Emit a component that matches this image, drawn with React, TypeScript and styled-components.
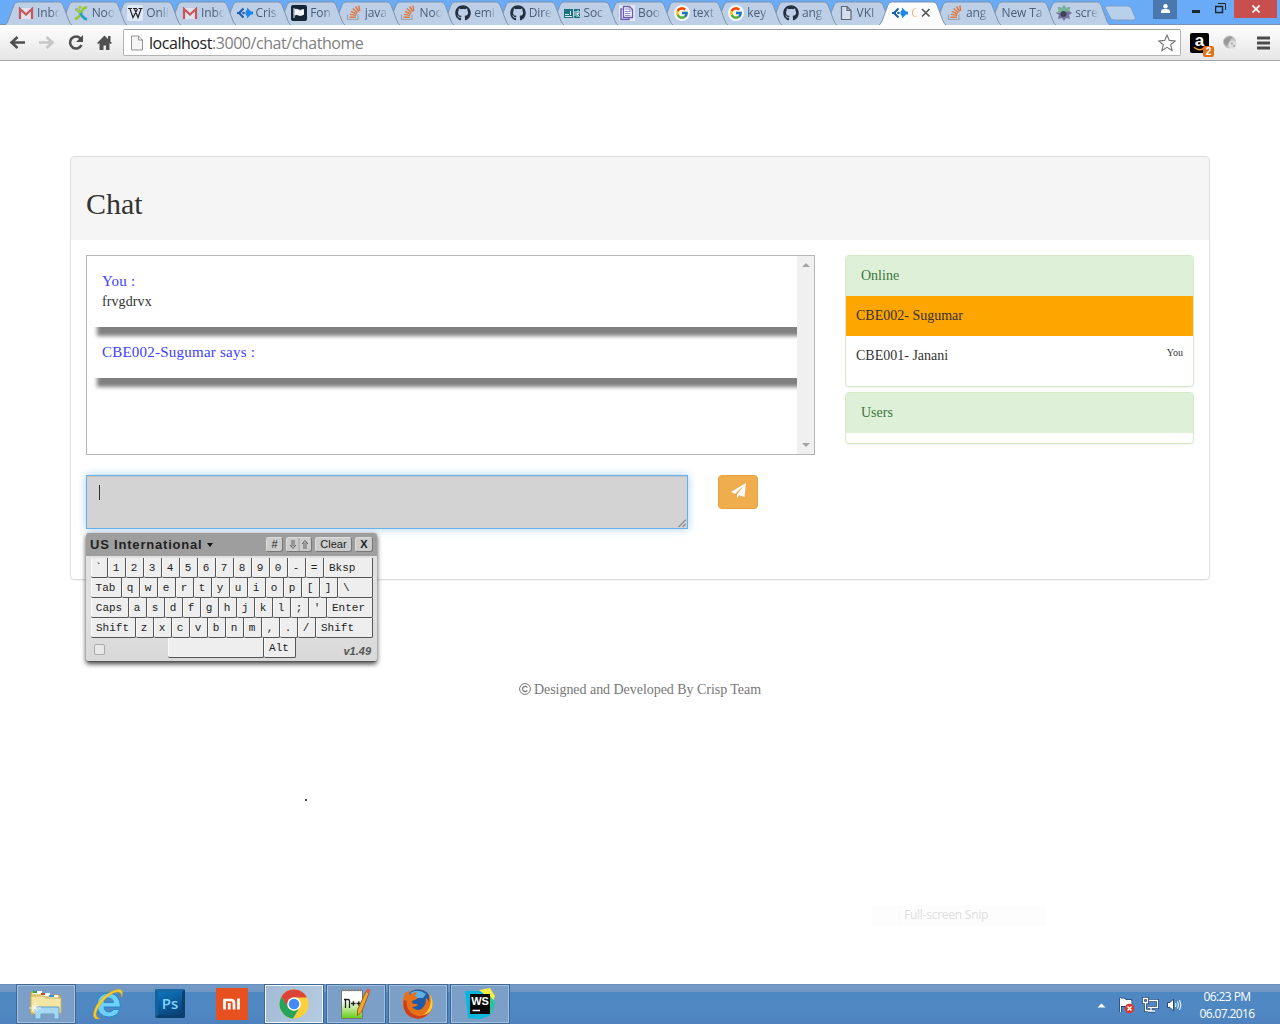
import React from 'react';
import styled, { createGlobalStyle, css } from 'styled-components';
import { FaGithub } from 'react-icons/fa';
import { FcGoogle } from 'react-icons/fc';

const GlobalStyle = createGlobalStyle`
  *, *::before, *::after { box-sizing: border-box; }
  body { margin: 0; background: #fff; overflow: hidden; }
`;

const uiFont = css`font-family: "Open Sans", "Noto Sans", sans-serif;`;

const Screen = styled.div`
  width: 1280px;
  height: 1024px;
  display: flex;
  flex-direction: column;
  font: 14px/20px "Liberation Serif", "Times New Roman", serif;
  color: #333;
  background: #fff;
  overflow: hidden;
`;

/* ---------- browser chrome ---------- */

const TabStrip = styled.header`
  ${uiFont}
  flex: none;
  height: 25px;
  display: flex;
  padding-left: 5px;
  background: #69abf6;
  border-bottom: 1px solid #7893b4;
`;

const TabBox = styled.div<{ $order: number }>`
  position: relative;
  flex: 0 0 54.65px;
  min-width: 0;
  height: 25px;
  z-index: ${p => p.$order};
`;

const TabShape = styled.svg`
  position: absolute;
  left: 0;
  top: 1px;
  display: block;
`;

const TabContent = styled.div`
  position: relative;
  display: flex;
  align-items: center;
  gap: 3px;
  height: 25px;
  padding-left: 13px;
  svg { flex: none; }
`;

const TabLabel = styled.span<{ $fade: number; $active?: boolean }>`
  flex: none;
  white-space: nowrap;
  font-size: 12px;
  line-height: 18px;
  letter-spacing: -0.1px;
  color: ${p => (p.$active ? '#e39a3b' : '#4b5e78')};
  mask-image: linear-gradient(90deg, #000 ${p => p.$fade - 9}px, transparent ${p => p.$fade}px);
`;

const CloseIcon = styled.svg`
  margin-left: -1px;
`;

const NewTab = styled.svg`
  flex: none;
  margin: 5px 0 0 6px;
  display: block;
`;

const WindowControls = styled.div`
  margin-left: auto;
  display: flex;
  align-items: flex-start;
  padding-right: 3px;
`;

const UserButton = styled.div`
  width: 24px;
  height: 19px;
  background: #4a78ae;
  display: grid;
  place-items: center;
  padding-bottom: 3px;
`;

const ControlButton = styled.div<{ $width: number; $bg?: string; $shift?: number }>`
  width: ${p => p.$width}px;
  height: 18px;
  padding-left: ${p => p.$shift ?? 0}px;
  background: ${p => p.$bg ?? 'transparent'};
  display: grid;
  place-items: center;
`;

const Toolbar = styled.nav`
  ${uiFont}
  flex: none;
  height: 36px;
  display: flex;
  align-items: center;
  padding-left: 8px;
  background: linear-gradient(#fefefe, #e6e6e6);
  border-bottom: 1px solid #a6a6a6;
`;

const NavIcons = styled.div`
  display: flex;
  width: 115px;
  gap: 9px;
  svg { display: block; }
`;

const AddressBar = styled.div`
  width: 1058px;
  height: 27px;
  display: flex;
  align-items: center;
  padding: 0 4px 0 6px;
  border: 1px solid #b3b3b3;
  border-top-color: #9f9f9f;
  border-radius: 2px;
  background: #fff;
`;

const Address = styled.span`
  margin-left: 5px;
  flex: 1;
  font-size: 16px;
  line-height: 22px;
  letter-spacing: -0.45px;
  color: #808080;
  b { font-weight: 400; color: #222; }
`;

const Extensions = styled.div`
  margin-left: 9px;
  display: flex;
  align-items: center;
  gap: 8px;
  svg { display: block; }
`;

const AmazonBadge = styled.div`
  position: relative;
  width: 19px;
  height: 20px;
  padding-top: 1px;
  border-radius: 2px;
  background: #000;
  color: #fff;
  font: bold 17px/13px "Liberation Sans", Arial, sans-serif;
  text-align: center;
`;

const AmazonSmile = styled.svg`
  margin: 0 3px;
`;

const AmazonCount = styled.span`
  position: absolute;
  left: 13px;
  top: 13px;
  width: 11px;
  height: 11px;
  border-radius: 2px;
  background: #e1701a;
  font: bold 10px/11px "Liberation Sans", Arial, sans-serif;
`;

/* ---------- page ---------- */

const Page = styled.main`
  flex: 1;
  min-height: 0;
  display: flex;
  flex-direction: column;
  padding: 95px 70px 0;
`;

const Panel = styled.section`
  width: 1140px;
  height: 424px;
  flex: none;
  border: 1px solid #ddd;
  border-radius: 4px;
  box-shadow: 0 1px 1px rgba(0, 0, 0, 0.05);
`;

const PanelHeading = styled.div`
  height: 83px;
  padding: 30px 15px 0;
  background: #f5f5f5;
  border-radius: 3px 3px 0 0;
`;

const Title = styled.h2`
  margin: 0;
  font-weight: 400;
  font-size: 30px;
  line-height: 33px;
`;

const PanelBody = styled.div`
  display: flex;
  gap: 30px;
  padding: 15px;
`;

const Conversation = styled.div`
  width: 729px;
  flex: none;
`;

const MessageBox = styled.div`
  display: flex;
  height: 200px;
  border: 1px solid #b5b5b5;
`;

const Messages = styled.div`
  flex: 1;
  overflow: hidden;
  padding: 15px 0 0 5px;
`;

const Message = styled.div`
  margin-bottom: 15px;
  padding: 0 10px 16px;
  background: #fff;
  box-shadow: 5px 9px 4px gray;
`;

const Sender = styled.div`
  font-size: 15px;
  color: #4040ff;
  letter-spacing: 0.23px;
`;

const MessageText = styled.div`
  margin-bottom: -2px;
  line-height: 22px;
  letter-spacing: 0.1px;
`;

const ScrollTrack = styled.div`
  width: 17px;
  display: flex;
  flex-direction: column;
  justify-content: space-between;
  align-items: center;
  padding: 7px 0 7px;
  background: #f0f0f0;
`;

const Composer = styled.div`
  display: flex;
  align-items: flex-start;
  gap: 30px;
  margin-top: 20px;
`;

const InputWrap = styled.div`
  position: relative;
  width: 602px;
`;

const Input = styled.div`
  height: 54px;
  display: flex;
  justify-content: space-between;
  padding: 9px 1px 1px 12px;
  background: #d3d3d3;
  border: 1px solid #66afe9;
  box-shadow: inset 0 1px 1px rgba(0, 0, 0, 0.075), 0 0 8px rgba(102, 175, 233, 0.6);
`;

const Caret = styled.span`
  width: 1px;
  height: 15px;
  background: #333;
`;

const Grip = styled.svg`
  align-self: flex-end;
  display: block;
`;

const SendButton = styled.button`
  width: 40px;
  height: 34px;
  padding: 0 0 4px 1px;
  display: grid;
  place-items: center;
  border: 1px solid #eea236;
  border-radius: 4px;
  background: #f0ad4e;
  color: #fff;
`;

const Sidebar = styled.aside`
  width: 349px;
  display: flex;
  flex-direction: column;
  gap: 5px;
`;

const ListPanel = styled.section`
  padding-bottom: 10px;
  border: 1px solid #d6e9c6;
  border-radius: 4px;
  box-shadow: 0 1px 1px rgba(0, 0, 0, 0.05);
`;

const ListHeading = styled.div`
  height: 40px;
  padding: 10px 15px;
  border-radius: 3px 3px 0 0;
  background: #dff0d8;
  color: #3c763d;
`;

const UserRow = styled.div<{ $active?: boolean }>`
  display: flex;
  justify-content: space-between;
  height: 40px;
  padding: 10px;
  background: ${p => (p.$active ? 'orange' : 'transparent')};
  small { font-size: 10px; line-height: 14px; }
`;

const Footer = styled.footer`
  margin-top: 100px;
  display: flex;
  justify-content: center;
  align-items: center;
  gap: 3px;
  color: #777;
  letter-spacing: -0.04px;
  svg { margin-bottom: 2px; }
`;

const Speck = styled.div`
  width: 2px;
  height: 2px;
  margin: 99px 0 0 235px;
  background: #444;
`;

const SnipGhost = styled.div`
  ${uiFont}
  width: 174px;
  height: 21px;
  margin: 104px 0 0 802px;
  padding-left: 32px;
  background: linear-gradient(90deg, #fdfdfd 27px, #f9f9f9 27px, #f9f9f9 28px, #fdfdfd 28px);
  color: #dedede;
  font-size: 12px;
  line-height: 20px;
  letter-spacing: -0.25px;
`;

/* ---------- virtual keyboard ---------- */

const Keyboard = styled.div`
  position: absolute;
  left: 0;
  top: 58px;
  width: 291px;
  height: 129px;
  border-radius: 3px;
  background: linear-gradient(#e0e0e0 60%, #d9d9d9);
  border-bottom: 1px solid #555;
  box-shadow: 0 2px 5px rgba(0, 0, 0, 0.75);
  color: #222;
  z-index: 2;
`;

const KeyboardHeader = styled.div`
  height: 23px;
  display: flex;
  align-items: center;
  gap: 3px;
  padding: 0 4px 1px;
  border-radius: 3px 3px 0 0;
  background: #9e9e9e;
  font-family: "Liberation Sans", Arial, sans-serif;
`;

const LayoutName = styled.div`
  flex: 1;
  display: flex;
  align-items: center;
  gap: 5px;
  padding-top: 2px;
  font-size: 13px;
  font-weight: bold;
  letter-spacing: 0.8px;
  white-space: nowrap;
`;

const HeaderButton = styled.span<{ $width: number; $bold?: boolean }>`
  flex: none;
  width: ${p => p.$width}px;
  height: 15px;
  display: flex;
  justify-content: center;
  align-items: center;
  border-radius: 3px;
  background: #ccc;
  border: 1px solid #ddd;
  border-right-color: #777;
  border-bottom-color: #777;
  font-size: 11px;
  line-height: 14px;
  font-weight: ${p => (p.$bold ? 'bold' : 'normal')};
`;

const KeyRows = styled.div`
  display: flex;
  flex-direction: column;
  padding: 2px 4px 0 5px;
`;

const KeyRow = styled.div`
  display: flex;
  height: 20px;
`;

const Key = styled.span<{ $width: number }>`
  width: ${p => p.$width}px;
  height: 20px;
  padding-right: 1px;
  display: grid;
  place-items: center;
  border-right: 1px solid #555;
  border-bottom: 1px solid #555;
  border-radius: 0 0 2px 2px;
  box-shadow: inset 1px 0 #fafafa;
  background: #eee;
  font: 11px/18px "Liberation Mono", "Courier New", monospace;
`;

const LeftKey = styled(Key)`
  justify-items: start;
  padding-left: 5px;
`;

const LastRow = styled.div`
  display: flex;
  align-items: flex-start;
  height: 20px;
`;

const CheckBox = styled.span`
  width: 11px;
  height: 11px;
  margin: 6px 63px 0 3px;
  border: 1px solid #aaa;
  border-radius: 2px;
  background: #e8e8e8;
`;

const Version = styled.span`
  margin: 4px 2px 0 auto;
  color: #555;
  font: italic bold 11px/18px "Liberation Sans", Arial, sans-serif;
`;

/* ---------- taskbar ---------- */

const Taskbar = styled.footer`
  ${uiFont}
  flex: none;
  height: 40px;
  display: flex;
  align-items: stretch;
  gap: 2px;
  padding: 0 23px 0 16px;
  background: linear-gradient(#5c85b4 0, #7399c6 1px, #7098c5 8px, #4e88c3 8px, #4f87c2 30px, #4d82bf);
  color: #fff;
`;

const TaskButton = styled.div<{ $state?: 'open' | 'active' }>`
  flex: 0 0 60px;
  display: grid;
  place-items: center;
  ${p =>
    p.$state &&
    css`
      border: 1px solid #3f6894;
      box-shadow: inset 0 0 0 1px ${p.$state === 'active' ? '#f2f7fc' : '#a2bfdd'};
      background: ${p.$state === 'active' ? 'linear-gradient(110deg, #a2bad5, #b6cce2)' : '#7c9fc7'};
    `}
`;

const Tray = styled.div`
  margin-left: auto;
  display: flex;
  align-items: center;
`;

const TrayIcons = styled.div`
  display: flex;
  align-items: center;
  gap: 7px;
  padding-top: 2px;
  svg { display: block; }
  svg:first-child { margin-right: 5px; }
`;

const Clock = styled.div`
  margin-left: 14px;
  width: 60px;
  text-align: center;
  font-size: 12px;
  line-height: 17px;
  letter-spacing: -0.6px;
  white-space: nowrap;
  padding-top: 1px;
`;

/* ---------- favicons ---------- */

const Gmail = () => (
  <svg width="16" height="16" viewBox="0 0 16 16">
    <path d="M1 3h14v11H1z" fill="#dfe3ec" />
    <path d="M2 14V4l6 5.500L14 4v10" fill="none" stroke="#c8555a" strokeWidth="2.200" />
  </svg>
);
const Nodejs = () => (
  <svg width="16" height="16" viewBox="0 0 16 16" fill="none" strokeWidth="2.800">
    <path d="M2 14q5-2 6-6 2-5 6-6" stroke="#9cc53d" />
    <path d="M2.500 4q3.500 1 5 4 2 5 6.500 6.500" stroke="#2a9fc4" />
    <path d="M2.500 4q3 1 5 4" stroke="#a4c84b" />
    <circle cx="7" cy="2.200" r="1.700" fill="#a6cc3b" />
  </svg>
);
const Wiki = () => (
  <svg width="16" height="16" viewBox="0 0 16 16">
    <rect width="16" height="16" rx="2" fill="#dfe8f5" />
    <path d="M1 3.500h4M6 3.500h4M11.500 3.500h4M3 4l3 8.500L10.500 4M7.500 4l3.500 8.500L14 4" fill="none" stroke="#222" strokeWidth="1.200" />
  </svg>
);
const Crisp = () => (
  <svg width="16" height="16" viewBox="0 0 16 16">
    <path d="M6.500 3.500L2 8l4.500 4.500" fill="none" stroke="#1b5daf" strokeWidth="2" />
    <path d="M0 7h4v2H0z" fill="#1b5daf" />
    <circle cx="6.500" cy="8" r="1.300" fill="#1b5daf" />
    <path d="M10 2.500L14 6.500h2v3h-2L10 13.500V11L8.500 9.500v-3L10 5z" fill="#1b87e5" />
  </svg>
);
const Flag = () => (
  <svg width="16" height="16" viewBox="0 0 16 16">
    <rect width="16" height="16" rx="2" fill="#162536" />
    <path d="M3 3v10M3.500 4.500q2.500-.5 4 .5t5-.5v5q-3.500 1.500-5 .5t-4 0" fill="#f4f7fb" stroke="#f4f7fb" />
  </svg>
);
const Stack = () => (
  <svg width="16" height="16" viewBox="0 0 16 16" fill="none">
    <path d="M1.500 9.500v5h10.500v-5" stroke="#9ca2ab" strokeWidth="1.200" />
    <path d="M3.500 12.300h6.500M3.900 9.400l6.300 1M4.900 6.400l5.700 2.600M6.800 3.600l4.700 4.200M9.500 1.500l3.200 5M12.800.5l1 5.500" stroke="#e0763c" strokeWidth="1.400" />
  </svg>
);
const Github = () => <FaGithub size={16} color="#24303f" />;
const Google = () => (
  <svg width="16" height="16" viewBox="0 0 16 16">
    <circle cx="8" cy="8" r="8" fill="#f4f7fb" />
    <FcGoogle x="1" y="1" width="14" height="14" />
  </svg>
);
const Society = () => (
  <svg width="16" height="16" viewBox="0 0 16 16">
    <path d="M0 4h9v9H0zM10 4h6v9h-6z" fill="#1c7180" />
    <path d="M1 9.500h4M1 11.500h7M6.500 6v4M11 6v5M13 12V6h2v2.500h-2l2.500 3.500" fill="none" stroke="#dcecf1" />
  </svg>
);
const Book = () => (
  <svg width="16" height="16" viewBox="0 0 16 16">
    <rect width="16" height="16" fill="#e3e5f5" />
    <path d="M3.500 4H2v10.500h8V13" fill="none" stroke="#6a5fae" strokeWidth="1.400" />
    <path d="M4.500 1.500h6l3 3v8h-9z" fill="#f7f7ff" stroke="#6a5fae" strokeWidth="1.300" />
    <path d="M6 4h3M6 6.500h5.500M6 8.500h5.500M6 10.500h5.500M10 1.500V5h3" fill="none" stroke="#7a70b8" strokeWidth=".8" />
  </svg>
);
const Doc = () => (
  <svg width="16" height="16" viewBox="0 0 16 16">
    <path d="M3.500 1.500h5.500l4 4v9h-9.500zM9 1.500v4h4" fill="#d3dfee" stroke="#5f6772" strokeWidth="1.200" />
  </svg>
);
const Gear = () => (
  <svg width="16" height="16" viewBox="0 0 16 16">
    <path d="M8 0l2 3 4-1-1 4 3 2-3 2 1 4-4-1-2 3-2-3-4 1 1-4-3-2 3-2-1-4 4 1z" fill="#77739f" />
    <path d="M8 0l2 3 4-1-1 4-5 2H0l3-2-1-4 4 1z" fill="#78b695" />
    <circle cx="7.500" cy="9" r="3" fill="#3f4259" />
  </svg>
);

interface TabData {
  icon?: React.ReactNode;
  label: string;
  active?: boolean;
}

const tabs: TabData[] = [
  { icon: <Gmail />, label: 'Inbo' },
  { icon: <Nodejs />, label: 'Noo' },
  { icon: <Wiki />, label: 'Onli' },
  { icon: <Gmail />, label: 'Inbo' },
  { icon: <Crisp />, label: 'Cris' },
  { icon: <Flag />, label: 'Fon' },
  { icon: <Stack />, label: 'java' },
  { icon: <Stack />, label: 'Noo' },
  { icon: <Github />, label: 'emi' },
  { icon: <Github />, label: 'Dire' },
  { icon: <Society />, label: 'Soc' },
  { icon: <Book />, label: 'Boo' },
  { icon: <Google />, label: 'text' },
  { icon: <Google />, label: 'key' },
  { icon: <Github />, label: 'ang' },
  { icon: <Doc />, label: 'VKI' },
  { icon: <Crisp />, label: 'C', active: true },
  { icon: <Stack />, label: 'ang' },
  { label: 'New Ta' },
  { icon: <Gear />, label: 'scre' },
];

const labelFade = (tab: TabData) => (tab.active ? 8 : tab.icon ? 23 : 43);

const Tab = ({ tab, index }: { tab: TabData; index: number }) => (
  <TabBox $order={tab.active ? 50 : 30 - index}>
    <TabShape width="68" height="24" viewBox="0 0 68 24">
      <path
        d="M0 24q2-1 3-4L9 4q1-3 4-3h41q3 0 4 3l6 16q1 3 3 4"
        fill={tab.active ? '#fcfcfc' : '#bccfe6'}
        stroke="#7d93b0"
      />
    </TabShape>
    <TabContent>
      {tab.icon}
      <TabLabel $fade={labelFade(tab)} $active={tab.active}>{tab.label}</TabLabel>
      {tab.active && (
        <CloseIcon width="10" height="10" viewBox="0 0 10 10">
          <path d="M1 1l7.500 7.500M8.500 1L1 8.500" stroke="#555" strokeWidth="1.700" />
        </CloseIcon>
      )}
    </TabContent>
  </TabBox>
);

const single = (keys: string): [string, number][] => keys.split('').map(k => [k, 18]);

const keyRows: [string, number][][] = [
  [['`', 17], ...single('1234567890-='), ['Bksp', 49]],
  [['Tab', 31], ...single('qwertyuiop[]'), ['\\', 35]],
  [['Caps', 38], ...single("asdfghjkl;'"), ['Enter', 46]],
  [['Shift', 45], ...single('zxcvbnm,./'), ['Shift', 57]],
];

const VirtualKeyboard = () => (
  <Keyboard>
    <KeyboardHeader>
      <LayoutName>
        US International
        <svg width="6" height="4" viewBox="0 0 6 4"><path d="M0 0h6L3 4z" fill="#111" /></svg>
      </LayoutName>
      <HeaderButton $width={17}>#</HeaderButton>
      <HeaderButton $width={26}>
        <svg width="24" height="13" viewBox="0 0 24 13" fill="none" stroke="#555" strokeWidth=".9">
          <path d="M5 2v6.500M7 2v6.500M3 7l3 3.500L9 7M17 11V4.500M19 11V4.500M15 6l3-3.500L21 6" />
          <path d="M12 0v13" stroke="#999" />
        </svg>
      </HeaderButton>
      <HeaderButton $width={37}>Clear</HeaderButton>
      <HeaderButton $width={18} $bold>X</HeaderButton>
    </KeyboardHeader>
    <KeyRows>
      {keyRows.map((row, r) => (
        <KeyRow key={r}>
          {row.map(([label, width], i) =>
            i === row.length - 1 ? (
              <LeftKey key={i} $width={width}>{label}</LeftKey>
            ) : (
              <Key key={i} $width={width}>{label}</Key>
            ),
          )}
        </KeyRow>
      ))}
      <LastRow>
        <CheckBox />
        <Key $width={96} />
        <Key $width={32}>Alt</Key>
        <Version>v1.49</Version>
      </LastRow>
    </KeyRows>
  </Keyboard>
);

/* ---------- taskbar artwork ---------- */

const Explorer = () => (
  <svg width="34" height="32" viewBox="0 0 34 32">
    <path d="M2 4h9l2 3h18v19H2z" fill="#e8cf7c" stroke="#b79b4c" />
    <path d="M4 3h9v3H4z" fill="#fff" /><path d="M4 3h4v2H4z" fill="#22a845" />
    <path d="M12 5h9v3h-9z" fill="#fff" /><path d="M12 5h4v2h-4z" fill="#d3422e" />
    <path d="M20 7h9v3h-9z" fill="#fff" /><path d="M20 7h5v2h-5z" fill="#3b8fd8" />
    <path d="M2 8h13l2 2h15v15H2z" fill="#f5e5a4" stroke="#cdb15e" />
    <path d="M6 31V20q0-1 1-1h22q1 0 1 1v11h-5v-5H12v5z" fill="#a5d6f2" stroke="#5fa1cb" />
    <path d="M6 14v12M0 20h12M3 17l6 6M9 17l-6 6" stroke="#fff" strokeWidth=".8" />
  </svg>
);
const InternetExplorer = () => (
  <svg width="34" height="34" viewBox="0 0 34 34">
    <path d="M29.500 20H13q.5 5 5 5 3 0 4.500-2.500h6.300Q26 30 17.500 30 6.500 29 6 18 6.500 6.500 18 6q11 1 11.500 14zM13 15.500h9.500q-1-4.500-4.700-4.500-4 0-4.800 4.500z" fill="#6fd0f7" stroke="#1d84c9" strokeWidth=".9" />
    <path d="M9 31.500q-6 1.500-6.500-3Q2.500 19 13 9.500 23 1.500 29 2.500q4 1 1.500 8 .5-5-3-5.500-5-.5-12.500 6Q6 20 5 26.500q-.3 4.500 4 5z" fill="#f6cf33" stroke="#d9a514" strokeWidth=".6" />
  </svg>
);
const PhotoshopTile = styled.div`
  width: 30px;
  height: 29px;
  margin-bottom: 2px;
  border: 3px solid #0b3f70;
  border-top-color: #1769a8;
  border-left-color: #1261a0;
  border-radius: 2px;
  background: linear-gradient(160deg, #0d74bd, #0a3f73);
  color: #7fd3ff;
  font: 600 15px/22px "Open Sans", sans-serif;
  text-align: center;
`;
const MiTile = () => (
  <svg width="32" height="32" viewBox="0 0 32 32">
    <path d="M0 0h32v32H0z" fill="#e8501f" />
    <path d="M8.500 21.500V12H15q3 0 3 3v6.500M13.200 15v6.500M22.500 10.600v10.900" fill="none" stroke="#fff" strokeWidth="2.700" />
  </svg>
);
const Chrome = () => (
  <svg width="30" height="30" viewBox="0 0 30 30">
    <circle cx="15" cy="15" r="14.500" fill="#fdd03b" />
    <path d="M2.400 7.800A14.500 14.500 0 0 1 28 8.500H15L8.800 19z" fill="#dc4437" />
    <path d="M2.400 7.800A14.500 14.500 0 0 0 14 29.500L21 18l-6 3.500L9.500 18.500z" fill="#28a35a" />
    <circle cx="15" cy="15" r="6.800" fill="#fff" />
    <circle cx="15" cy="15" r="5.300" fill="#4589f5" />
  </svg>
);
const Notepad = () => (
  <svg width="32" height="34" viewBox="0 0 32 34">
    <defs>
      <linearGradient id="pad" x1="0" y1="0" x2="0" y2="1">
        <stop offset=".35" stopColor="#fff" /><stop offset="1" stopColor="#66cc12" />
      </linearGradient>
    </defs>
    <path d="M1.500 3.500h21v28h-21z" fill="url(#pad)" stroke="#777" />
    <path d="M2 3h20" stroke="#888" strokeWidth="2.500" strokeDasharray="1.500 1.500" />
    <path d="M5.500 21V12M4 12.500h4q1.500 0 1.500 1.500v7M11 16.500h4.500M13.300 14.300v4.500M16.500 16.500H21M18.800 14.300v4.500" fill="none" stroke="#222" strokeWidth="1.300" />
    <path d="M26 4.500l3 1.500-7.500 19-4 3.500V23z" fill="#f0a930" stroke="#a45c1b" />
    <path d="M26 4.500l1-3 4 1.500-2 3z" fill="#db5b51" />
  </svg>
);
const Firefox = () => (
  <svg width="32" height="32" viewBox="0 0 32 32">
    <circle cx="16" cy="16" r="14.500" fill="#e66a17" />
    <path d="M6 6q4-4.500 10-4.500 7 0 10.500 5l1 6q0 8-6 10-8 1-12-4z" fill="#1f5ca8" />
    <path d="M8 5q8-5 16 1l-3 4-8 0z" fill="#5fb2e4" />
    <path d="M3 5q-5 12 2 20 9 8 19 2 7-5 6-14-1-5-3-7 1 5 0 8-1-3-3-4 0 10-7 12-6 0-7-3 4 0 6-2-2-2-5-1-1-1-1-3l5-2q1-2-2-3l2-4q-4 0-6 3-2-1-2-4-2 1-4 2z" fill="#e8701a" />
    <path d="M1.800 12q-2 12 7 17 11 5 18-4-8 6-16 1-7-5-6-13z" fill="#c9401b" />
    <path d="M27.500 6q3 8-1 15-2 4-6 6 7-1 9.500-7 2-8-2.500-14z" fill="#fbd03c" />
  </svg>
);
const WebStorm = () => (
  <svg width="34" height="34" viewBox="0 0 34 34">
    <path d="M2 4l14 0 11 2 4 14-5 9-9 3-12-1z" fill="#08b7dd" />
    <path d="M16 3l11-2 5 8-3 8-8-10z" fill="#f7ed45" />
    <path d="M27 9l5 6-4 12-6 0z" fill="#20ca9c" />
    <path d="M7 7h20v20H7z" fill="#080808" />
    <path d="M9.500 23.500h7.500" stroke="#fff" strokeWidth="1.500" />
    <text x="17" y="17.500" textAnchor="middle" fill="#fff" fontFamily="Liberation Sans, Arial, sans-serif" fontSize="11" fontWeight="bold">WS</text>
  </svg>
);

const App = () => (
  <Screen>
    <GlobalStyle />
    <TabStrip>
      {tabs.map((tab, i) => <Tab key={i} tab={tab} index={i} />)}
      <NewTab width="32" height="16" viewBox="0 0 32 16">
        <path d="M2.500 1h21q2.500 0 3.500 2l4 9q1 3-1.500 3H10q-2.500 0-3.500-2L1.500 3.500Q.5 1 2.500 1z" fill="#b9d0ec" stroke="#7d9fc8" />
      </NewTab>
      <WindowControls>
        <UserButton>
          <svg width="9" height="9" viewBox="0 0 9 9" fill="#fff">
            <circle cx="4.500" cy="2.300" r="2.200" /><path d="M0 9V7q0-2 4.500-2T9 7v2z" />
          </svg>
        </UserButton>
        <ControlButton $width={34} $shift={4}>
          <svg width="10" height="14" viewBox="0 0 10 14"><path d="M1 8h8v3H1z" fill="#1b2735" /></svg>
        </ControlButton>
        <ControlButton $width={23}>
          <svg width="16" height="14" viewBox="0 0 16 14" fill="none" stroke="#1b2735">
            <path d="M.5 4.500h7v6h-7z" strokeWidth="1.500" /><path d="M3 1.500h7.500V8" />
          </svg>
        </ControlButton>
        <ControlButton $width={43} $bg="#c7504f" $shift={1}>
          <svg width="8" height="8" viewBox="0 0 8 8"><path d="M.5.5l7 7M7.500.5l-7 7" stroke="#fff" strokeWidth="1.700" /></svg>
        </ControlButton>
      </WindowControls>
    </TabStrip>

    <Toolbar>
      <NavIcons>
        <svg width="20" height="20" viewBox="0 0 20 20" fill="none" stroke="#505050" strokeWidth="2.600"><path d="M17 9.500H4M9.500 4L3.500 9.500l6 5.500" /></svg>
        <svg width="20" height="20" viewBox="0 0 20 20" fill="none" stroke="#c6c6c6" strokeWidth="2.600"><path d="M2 9.500h13M9.500 4l6 5.500-6 5.500" /></svg>
        <svg width="20" height="20" viewBox="0 0 20 20"><path d="M14.500 5.500A6 6 0 1 0 15.500 12" fill="none" stroke="#505050" strokeWidth="2.600" /><path d="M17 2v7h-7z" fill="#505050" /></svg>
        <svg width="20" height="20" viewBox="0 0 20 20" fill="#505050"><path d="M9.500 2.500l7.500 7.500-1.200 1-1.300-1v7H11v-4.500H8.500V17H4.500v-7l-1.300 1L2 10z" /><path d="M13 3h2.500v5H13z" /></svg>
      </NavIcons>
      <AddressBar>
        <svg width="14" height="16" viewBox="0 0 14 16"><path d="M1.500 1h7L12.500 5v10h-11zM8.500 1v4h4" fill="#f5f5f5" stroke="#929292" /></svg>
        <Address><b>localhost</b>:3000/chat/chathome</Address>
        <svg width="18" height="18" viewBox="0 0 18 18">
          <path d="M9 1l2.300 5.400 5.900.5-4.500 3.900 1.400 5.700L9 13.400l-5.100 3.100 1.400-5.700L.8 6.900l5.900-.5z" fill="#fff" stroke="#747474" strokeWidth="1.100" />
        </svg>
      </AddressBar>
      <Extensions>
        <AmazonBadge>
          a
          <AmazonSmile width="13" height="5" viewBox="0 0 14 5"><path d="M1 0q6 5 11 1" fill="none" stroke="#f49b2a" strokeWidth="1.500" /></AmazonSmile>
          <AmazonCount>2</AmazonCount>
        </AmazonBadge>
        <svg width="26" height="18" viewBox="0 0 26 18">
          <circle cx="12.500" cy="8" r="6.500" fill="#c2c2c2" />
          <path d="M7 6q4-5 9-3l-3 3 1 2-4 4q-4-2-3-6z" fill="#999" />
          <circle cx="15.500" cy="10.500" r="4" fill="#dedede" />
          <path d="M14 8.500h2v2h-2zM16 11h2v2h-2z" fill="#b0b0b0" />
        </svg>
        <svg width="26" height="14" viewBox="0 0 26 14"><path d="M6 2h13M6 7h13M6 12h13" stroke="#4b4b4b" strokeWidth="2.800" /></svg>
      </Extensions>
    </Toolbar>

    <Page>
      <Panel>
        <PanelHeading><Title>Chat</Title></PanelHeading>
        <PanelBody>
          <Conversation>
            <MessageBox>
              <Messages>
                <Message>
                  <Sender>You :</Sender>
                  <MessageText>frvgdrvx</MessageText>
                </Message>
                <Message>
                  <Sender>CBE002-Sugumar says :</Sender>
                </Message>
              </Messages>
              <ScrollTrack>
                <svg width="8" height="4" viewBox="0 0 8 4"><path d="M0 4h8L4 0z" fill="#a3a3a3" /></svg>
                <svg width="8" height="4" viewBox="0 0 8 4"><path d="M0 0h8L4 4z" fill="#a3a3a3" /></svg>
              </ScrollTrack>
            </MessageBox>
            <Composer>
              <InputWrap>
                <Input>
                  <Caret />
                  <Grip width="8" height="8" viewBox="0 0 8 8"><path d="M.5 8L8 .5M4.500 8L8 4.500" stroke="#555" /></Grip>
                </Input>
                <VirtualKeyboard />
              </InputWrap>
              <SendButton>
                <svg width="15" height="15" viewBox="0 0 15 15" fill="#fff">
                  <path d="M15 0L0 9l4 1.700L13 2.500 6 11.500V15l2.200-2.700L13.500 14z" />
                </svg>
              </SendButton>
            </Composer>
          </Conversation>
          <Sidebar>
            <ListPanel>
              <ListHeading>Online</ListHeading>
              <UserRow $active>CBE002- Sugumar</UserRow>
              <UserRow>CBE001- Janani<small>You</small></UserRow>
            </ListPanel>
            <ListPanel>
              <ListHeading>Users</ListHeading>
            </ListPanel>
          </Sidebar>
        </PanelBody>
      </Panel>
      <Footer>
        <svg width="12" height="12" viewBox="0 0 12 12" fill="none" stroke="#777">
          <circle cx="6" cy="6" r="5.400" /><path d="M8.300 4.600A2.600 2.600 0 1 0 8.300 7.400" strokeWidth="1.200" />
        </svg>
        Designed and Developed By Crisp Team
      </Footer>
      <Speck />
      <SnipGhost>Full-screen Snip</SnipGhost>
    </Page>

    <Taskbar>
      <TaskButton $state="open"><Explorer /></TaskButton>
      <TaskButton><InternetExplorer /></TaskButton>
      <TaskButton><PhotoshopTile>Ps</PhotoshopTile></TaskButton>
      <TaskButton><MiTile /></TaskButton>
      <TaskButton $state="active"><Chrome /></TaskButton>
      <TaskButton $state="open"><Notepad /></TaskButton>
      <TaskButton $state="open"><Firefox /></TaskButton>
      <TaskButton $state="open"><WebStorm /></TaskButton>
      <Tray>
        <TrayIcons>
          <svg width="9" height="5" viewBox="0 0 9 5"><path d="M.5 4.500h8l-4-4z" fill="#fff" /></svg>
          <svg width="17" height="18" viewBox="0 0 17 18">
            <path d="M2.500 2v14M2.500 3h4l1.500 1.500h5V11H8L6.500 9.500h-4z" fill="#fff" stroke="#24476f" strokeWidth="2.500" />
            <path d="M2.500 2v14M2.500 3h4l1.500 1.500h5V11H8L6.500 9.500h-4z" fill="#fff" stroke="#fff" />
            <circle cx="11.500" cy="12.500" r="4.800" fill="#d9362c" />
            <path d="M9.500 10.500l4 4M13.500 10.500l-4 4" stroke="#fff" strokeWidth="1.500" />
          </svg>
          <svg width="17" height="16" viewBox="0 0 17 16" fill="none">
            <path d="M7 3.500h8.500v7H6M9 10.500v3M6 14h7M1.500 1.500h4v4h-4zM3.500 5.500v8h4" stroke="#24476f" strokeWidth="3" />
            <path d="M7 3.500h8.500v7H6M9 10.500v3M6 14h7M1.500 1.500h4v4h-4zM3.500 5.500v8h4" stroke="#fff" strokeWidth="1.300" />
          </svg>
          <svg width="17" height="16" viewBox="0 0 17 16" fill="none">
            <path d="M1.500 5.500h2.500L7.500 2v12L4 10.500H1.500z" fill="#fff" stroke="#24476f" />
            <path d="M9.500 6q1 2 0 4M11.500 4.500q2 3.500 0 7M13.500 3q3 5 0 10" stroke="#fff" />
          </svg>
        </TrayIcons>
        <Clock>06:23 PM<br />06.07.2016</Clock>
      </Tray>
    </Taskbar>
  </Screen>
);

export default App;
